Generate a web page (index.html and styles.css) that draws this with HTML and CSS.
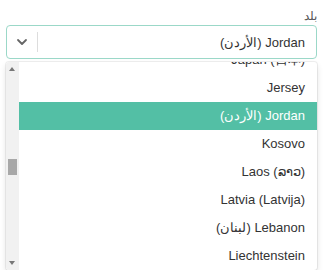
FILE: index.html
```html
<!DOCTYPE html>
<html lang="ar">
<head>
<meta charset="utf-8">
<link rel="stylesheet" href="styles.css">
</head>
<body>
<div class="field">
  <div class="label">بلد</div>
  <div class="select">
    <div class="indicators">
      <svg class="chev" width="12" height="8" viewBox="0 0 12 8"><path d="M2 2 L6 6 L10 2" fill="none" stroke="#666" stroke-width="1.8" stroke-linecap="round" stroke-linejoin="round"/></svg>
      <span class="sep"></span>
    </div>
    <div class="value">Jordan (الأردن)</div>
  </div>
  <div class="menu">
    <div class="scrollbar">
      <span class="arrow up"></span>
      <span class="thumb"></span>
      <span class="arrow down"></span>
    </div>
    <div class="viewport">
      <div class="list">
        <div class="opt">Japan (日本)</div>
        <div class="opt">Jersey</div>
        <div class="opt active">Jordan (الأردن)</div>
        <div class="opt">Kosovo</div>
        <div class="opt">Laos (ລາວ)</div>
        <div class="opt">Latvia (Latvija)</div>
        <div class="opt">Lebanon (لبنان)</div>
        <div class="opt">Liechtenstein</div>
      </div>
    </div>
  </div>
</div>
</body>
</html>
```
FILE: styles.css
```css
html, body { margin: 0; padding: 0; background: #fff; }
body { font-family: "Liberation Sans", Arial, "Noto Sans", sans-serif; color: #333; }
.field { padding: 8px 11px 0 6px; }
.label { text-align: right; font-size: 12px; color: #555; height: 17px; line-height: 17px; padding-right: 0; direction: rtl; }
.select {
  height: 32px; border: 1px solid #9bd8c8; border-radius: 4px;
  display: flex; align-items: center; box-sizing: content-box;
}
.indicators { display: flex; align-items: center; width: 32px; height: 100%; }
.chev { margin-left: 9px; }
.sep { width: 1px; height: 20px; background: #ddd; margin-left: 9px; }
.value { flex: 1; text-align: right; font-size: 13px; padding-right: 11px; color: #333; direction: rtl; }
.menu {
  margin-top: 3px; height: 208px; display: flex; background: #fff;
  box-shadow: 0 0 0 1px rgba(0,0,0,0.06), 0 3px 6px rgba(0,0,0,0.12);
  border-radius: 3px; overflow: hidden;
}
.scrollbar { width: 13px; background: #f1f1f1; position: relative; flex: none; }
.arrow { position: absolute; left: 3px; width: 0; height: 0; border-left: 3px solid transparent; border-right: 3px solid transparent; }
.arrow.up { top: 5px; border-bottom: 4px solid #777; }
.arrow.down { bottom: 5px; border-top: 4px solid #777; }
.thumb { position: absolute; left: 2px; width: 9px; top: 97px; height: 16px; background: #a8a8a8; }
.viewport { flex: 1; overflow: hidden; }
.list { margin-top: -16px; }
.opt { height: 28px; line-height: 28px; text-align: right; padding-right: 12px; font-size: 13px; color: #333; direction: rtl; }
.opt.active { background: #53bfa5; color: #fff; }
```
